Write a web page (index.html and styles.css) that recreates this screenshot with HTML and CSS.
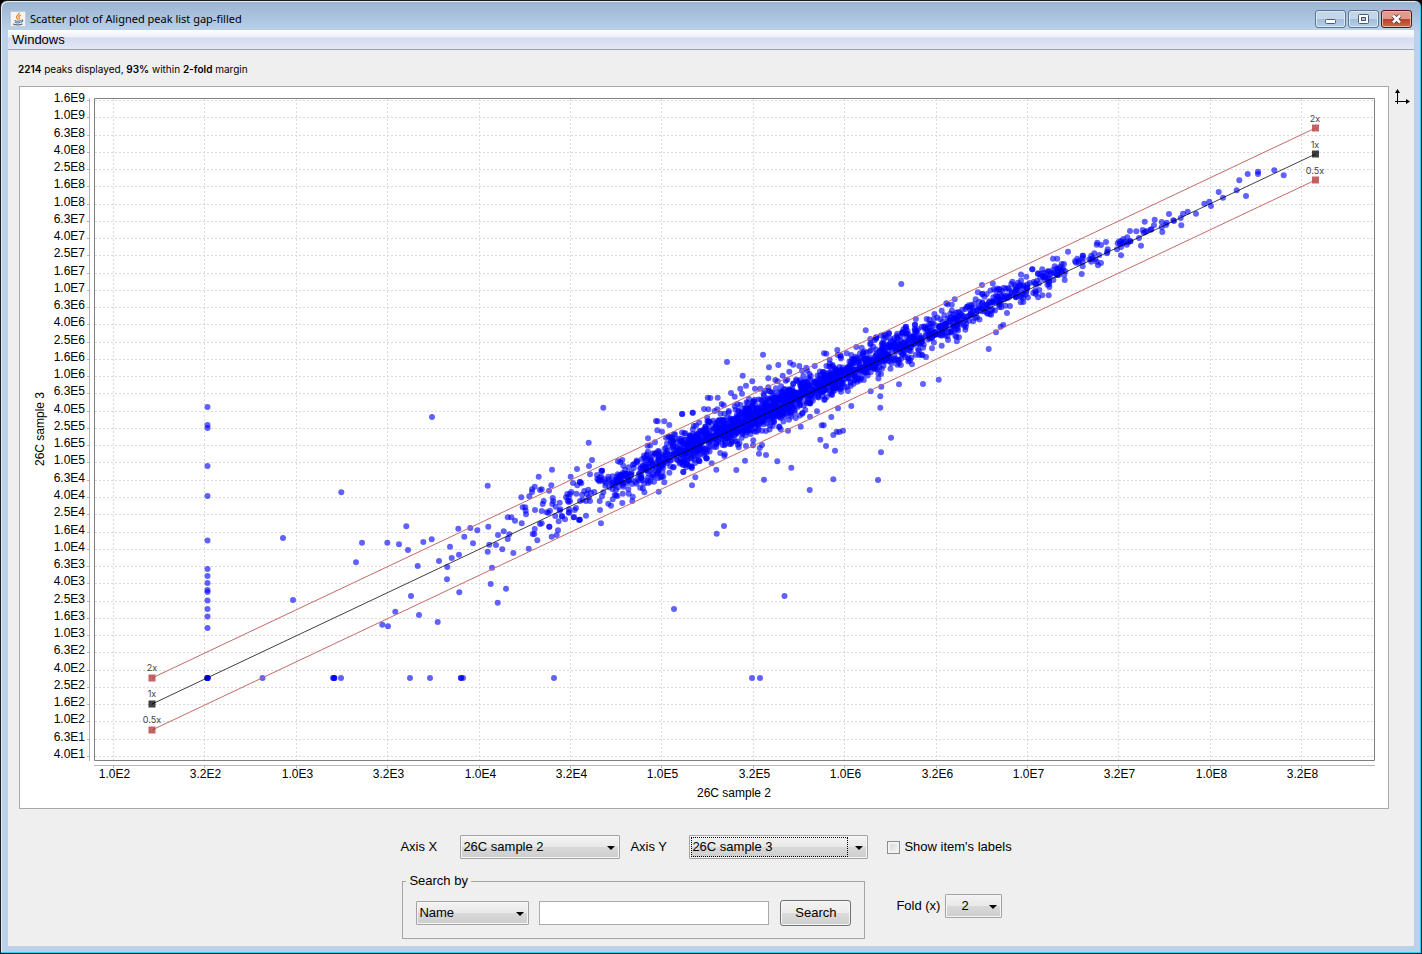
FILE: index.html
```html
<!DOCTYPE html>
<html lang="en">
<head>
<meta charset="utf-8">
<title>Scatter plot of Aligned peak list gap-filled</title>
<link rel="stylesheet" href="styles.css">
</head>
<body>
<div class="window">
  <header class="titlebar">
    <svg class="app-icon" viewBox="0 0 16 16" aria-hidden="true">
      <rect x="0.5" y="0.5" width="15" height="15" rx="1" fill="#f4f4f2" stroke="#c9ccd0"/>
      <path d="M9 1.500c1 2-3 3-2.500 4.800.2.900 1.200 1.300 1 2.400M11 4c-2 .8-2.600 1.600-1.800 2.600.6.8 0 1.400-.6 1.900" fill="none" stroke="#e8852c" stroke-width="1.300"/>
      <path d="M4.500 9.500c1.500.9 5 .9 6.500 0M5 11.300c1.500.8 4 .8 5.500 0M11.300 9c1.800-.4 2.200 1.400-.3 2.300M3 13c2 1.200 7.500 1.200 9.500 0" fill="none" stroke="#51718f" stroke-width="1.100"/>
    </svg>
    <h1 class="title">Scatter plot of Aligned peak list gap-filled</h1>
    <div class="window-buttons">
      <button class="wbtn" type="button" aria-label="Minimize"><svg viewBox="0 0 29 16"><rect x="9.500" y="8.500" width="10" height="4" rx="1" fill="#fff" stroke="#4d5a6b"/></svg></button>
      <button class="wbtn" type="button" aria-label="Maximize"><svg viewBox="0 0 29 16"><rect x="9.500" y="3.500" width="10" height="9" rx="1" fill="#fff" stroke="#4d5a6b"/><rect x="12.500" y="6.500" width="4" height="3" fill="#a9c2df" stroke="#4d5a6b"/></svg></button>
      <button class="wbtn close" type="button" aria-label="Close"><svg viewBox="0 0 29 16"><path d="M11 4.500l7 7M18 4.500l-7 7" stroke="#5b3b3e" stroke-width="4.500"/><path d="M11 4.500l7 7M18 4.500l-7 7" stroke="#fff" stroke-width="2.600"/></svg></button>
    </div>
  </header>
  <div class="client">
    <nav class="menubar"><button class="menu" type="button">Windows</button></nav>
    <p class="summary"><b>2214</b> peaks displayed, <b>93%</b> within <b>2-fold</b> margin</p>
    <main class="workspace">
      <div class="chart">
        <svg id="plot" class="plot" viewBox="20 87 1368 721" role="img" aria-label="Scatter plot of 26C sample 3 against 26C sample 2">
          <g id="grid"></g>
          <path class="frame" d="M94.500 98.500H1374.500V760.500H94.500Z"/>
          <path class="axis" d="M89.500 98V761M94 765.500H1375"/>
          <g id="points"></g>
          <g class="folds">
            <path class="fold" d="M152 678L1315.500 128M152 730L1315.500 180"/>
            <path class="unity" d="M152 704L1315.500 154"/>
            <path class="fold-mark" d="M148.500 674.500h7v7h-7zM148.500 726.500h7v7h-7zM1312 124.500h7v7h-7zM1312 176.500h7v7h-7z"/>
            <path class="unity-mark" d="M148.500 700.500h7v7h-7zM1312 150.500h7v7h-7z"/>
            <g class="fold-label">
              <text x="152" y="671">2x</text><text x="152" y="697">1x</text><text x="152" y="723">0.5x</text>
              <text x="1315" y="122">2x</text><text x="1315" y="148">1x</text><text x="1315" y="174">0.5x</text>
            </g>
          </g>
          <g id="ticks" class="ticks"></g>
          <text class="axis-name" x="734" y="797">26C sample 2</text>
          <text class="axis-name" transform="translate(44 429) rotate(-90)">26C sample 3</text>
        </svg>
      </div>
      <button class="axes-tool" type="button" aria-label="Setup axes">
        <svg viewBox="0 0 16 16"><path d="M3.500 15V2M1 12.500H13" fill="none" stroke="#000"/><path d="M3.500 0L6 4H1zM16 12.500L12 10v5z"/></svg>
      </button>
    </main>
    <form class="controls" onsubmit="return false">
      <div class="row">
        <label class="axis-label" for="ax">Axis X</label>
        <span class="select select-x"><select id="ax"><option>26C sample 2</option></select></span>
        <label class="axis-label second" for="ay">Axis Y</label>
        <span class="select select-y"><select id="ay"><option>26C sample 3</option></select></span>
        <label class="check"><input type="checkbox">Show item's labels</label>
      </div>
      <div class="row lower">
        <fieldset class="search">
          <legend>Search by</legend>
          <span class="select select-name"><select aria-label="Search field"><option>Name</option></select></span>
          <input class="query" type="text" aria-label="Search text">
          <button class="go" type="submit">Search</button>
        </fieldset>
        <label class="fold-text" for="fold">Fold (x)</label>
        <span class="select select-fold"><select id="fold"><option>2</option></select></span>
      </div>
    </form>
  </div>
</div>
<script src="plot.js"></script>
</body>
</html>
```
FILE: styles.css
```css
* { box-sizing: border-box; }
body {
  margin: 0;
  font: 13px/16px "Liberation Sans", Arial, sans-serif;
  color: #000;
  background: #000;
}
button, input, select { font: inherit; color: inherit; }
.window {
  display: flex;
  flex-direction: column;
  min-height: 100vh;
  padding: 0 7px 7px;
  border: 1px solid #1a1a1a;
  border-radius: 7px 7px 0 0;
  background: linear-gradient(#9ab3d0, #b9d1ea 30px, #b9d1ea);
  box-shadow: inset -1px -1px #35d0e6, inset 1px 1px #e4eef8;
}
.titlebar {
  display: flex;
  align-items: center;
  height: 29px;
  padding: 6px 2px 0;
}
.app-icon { width: 16px; height: 16px; margin-right: 4px; }
.title { flex: 1; margin: 0; font: 11px/16px "Noto Sans", "Open Sans", sans-serif; }
.window-buttons { display: flex; gap: 2px; }
.wbtn {
  width: 31px;
  height: 18px;
  padding: 0;
  border: 1px solid #5f7691;
  border-radius: 3px;
  background: linear-gradient(#c3d6ea 50%, #a3bcd8 50%, #b5cfe8);
  box-shadow: inset 0 0 0 1px #dbe7f4;
}
.wbtn svg { display: block; width: 29px; height: 16px; }
.wbtn.close {
  border-color: #55151b;
  background: linear-gradient(#df9b8c 50%, #bb3c26 50%, #cf6a4c);
  box-shadow: inset 0 0 0 1px #e9b6aa;
}
.client { flex: 1; background: #efefef; }
.menubar {
  height: 20px;
  border-bottom: 1px solid #9fa3ae;
  background: linear-gradient(#fff, #eceff8 7px, #d5dcee 8px, #e2e7f6);
}
.menu { height: 19px; padding: 0 4px; border: 0; background: none; }
.summary { margin: 0; padding: 12px 10px 10px; font: 10px/14px Inter, "Liberation Sans", sans-serif; }
.summary b { font-weight: 600; }
.workspace { display: flex; gap: 5px; padding: 0 4px 0 11px; }
.chart { flex: 1; min-width: 0; border: 1px solid #a9a9a9; background: #fff; }
.plot { display: block; width: 100%; height: auto; }
.axes-tool { align-self: flex-start; width: 16px; margin-top: 3px; padding: 0; border: 0; background: none; }
.axes-tool svg { display: block; width: 16px; height: 16px; }

.grid-line { fill: none; stroke: #dadada; stroke-dasharray: 2 2; }
.frame { fill: none; stroke: #808080; }
.axis { fill: none; stroke: #b4b4b4; }
.point { fill: #00f; fill-opacity: 0.62; }
.fold { fill: none; stroke: #c46a6a; }
.unity { fill: none; stroke: #000; stroke-opacity: 0.75; }
.fold-mark { fill: #b84848; fill-opacity: 0.85; }
.unity-mark { fill: #000; fill-opacity: 0.75; }
.fold-label { font: 9px Inter, "Liberation Sans", sans-serif; fill: #444; text-anchor: middle; }
.ticks, .axis-name { font-size: 12px; }
.axis-name { text-anchor: middle; }
.tick-y { text-anchor: end; }
.tick-x { text-anchor: middle; }

.controls { width: max-content; margin: 0 auto; padding: 26px 10px 6px 0; }
.row { display: flex; align-items: center; }
.axis-label { width: 60px; }
.axis-label.second { margin-left: 10px; width: 59px; }
.select { position: relative; display: inline-flex; }
.select::after {
  content: "";
  position: absolute;
  right: 5px;
  top: 11px;
  border: 4px solid transparent;
  border-top-color: #000;
  border-bottom: 0;
  pointer-events: none;
}
select {
  appearance: none;
  width: 100%;
  height: 24px;
  margin: 0;
  padding: 0 18px 0 2px;
  border: 1px solid #a3a3a3;
  border-radius: 1px;
  background: linear-gradient(#f3f3f3, #e8e8e8 50%, #d9d9d9 50%, #cdcdcd);
  box-shadow: inset 0 0 0 1px #f5f5f5;
}
.select-x { width: 160px; }
.select-y { width: 179px; }
.select-y::before {
  content: "";
  position: absolute;
  inset: 2px 20px 2px 2px;
  border: 1px dotted #000;
  pointer-events: none;
}
.select-name { width: 113px; }
.select-fold { width: 57px; }
.select-fold select { padding-left: 15px; }
.check { display: flex; align-items: center; margin-left: 19px; }
.check input {
  appearance: none;
  width: 13px;
  height: 13px;
  margin: 0 4px 0 0;
  border: 1px solid #8a8f94;
  background: linear-gradient(135deg, #cfd4da, #f8f8f8);
  box-shadow: inset 0 0 0 2px #f2f2f2;
}
.lower { margin-top: 14px; padding-left: 2px; }
.search {
  display: flex;
  align-items: center;
  min-width: 0;
  margin: 0;
  padding: 11px 13px 12px;
  border: 1px solid #a5a5a5;
}
.search legend { margin-left: -10px; padding: 0 3px; }
.query { width: 230px; height: 24px; margin: 0 11px 0 10px; padding: 0 3px; border: 1px solid #a9abae; background: #fff; }
.go {
  width: 71px;
  height: 26px;
  padding: 0;
  border: 1px solid #707070;
  border-radius: 3px;
  background: linear-gradient(#f3f3f3, #ebebeb 50%, #dcdcdc 50%, #cfcfcf);
  box-shadow: inset 0 0 0 1px #f8f8f8;
}
.fold-text { margin: 0 5px 0 31px; }
```
FILE: plot.js
```js
const NS = "http://www.w3.org/2000/svg";
function add(parent, name, attrs, text) {
  const el = document.createElementNS(NS, name);
  for (const key in attrs) el.setAttribute(key, attrs[key]);
  if (text) el.textContent = text;
  parent.appendChild(el);
}
const grid = document.getElementById("grid");
const ticks = document.getElementById("ticks");
const points = document.getElementById("points");

// Both axes are logarithmic; values print as mantissa and exponent.
function label(log) {
  const exp = Math.floor(log + 1e-6);
  return Math.pow(10, log - exp).toFixed(1) + "E" + exp;
}
for (let i = 0; i <= 38; i++) {
  const y = Math.round(100 + i * 17.26) + 0.5;
  add(grid, "path", { class: "grid-line", d: `M95 ${y}H1374` });
  add(grid, "path", { class: "axis", d: `M87 ${y}h2` });
  add(ticks, "text", { class: "tick-y", x: 85, y: y + 1.5 }, label(9.2 - i * 0.2));
}
for (let i = 0; i <= 13; i++) {
  const x = Math.round(113 + i * 91.4) + 0.5;
  add(grid, "path", { class: "grid-line", d: `M${x} 99V760` });
  add(grid, "path", { class: "axis", d: `M${x} 766v2` });
  add(ticks, "text", { class: "tick-x", x: x + 1, y: 778 }, label(2 + i * 0.5));
}

function dot(x, y) {
  add(points, "circle", { class: "point", cx: x.toFixed(1), cy: y.toFixed(1), r: 3 });
}
// Peak lists are stored in thirds of a unit relative to their own origin.
function series(x0, y0, list) {
  const n = list.trim().split(/[\s,]+/).map(Number);
  for (let i = 0; i < n.length; i += 2) dot(x0 + n[i] / 3, y0 + n[i + 1] / 3);
}
[407, 425, 428, 466, 496, 540.5, 569, 576, 583, 590, 592, 600.5, 609, 616.5, 628, 678, 678, 678, 678, 678].forEach(y => dot(207.5, y));
[262.5, 333, 334, 334, 334.5, 341, 410, 430, 461, 461, 463, 554, 752, 760].forEach(x => dot(x, 678));
[[283, 538], [293, 600], [432, 417], [674, 609], [784.5, 596], [724, 526]].forEach(p => dot(p[0], p[1]));

series(340, 460, `4,97 443,77 636,29 596,50 692,50 199,199 66,248 142,248 177,253 204,270 48,307 250,246 275,238 330,260
355,206 391,204 412,211 445,200 373,230 399,250 357,284 335,294 297,303 322,321 233,318 321,358 213,408 358,397 166,455
237,465 127,494 144,499 293,486 473,428 452,372 498,386 456,323 443,275 448,254 468,255 487,268 474,225 491,214 508,223
503,237 520,279 566,266 592,241 545,190 525,182 514,172 503,172 544,112 568,109 576,88 584,80 576,96 600,90 605,88
634,76 627,92 548,142 556,142 557,152 558,163 585,150 605,153 611,123 608,132 638,114 640,124 637,132 659,128 647,140
625,158 630,152 620,157 646,168 661,148 659,152 666,169 666,169 675,178 656,184 628,200 628,200 600,192 605,190 584,207
583,222 578,222 654,211 650,225 635,230 682,102 690,102 694,96 709,101 678,112 686,112 683,122 690,123 686,126 699,69
687,148 686,158 704,150 708,144 702,172 717,180 688,157 701,172 711,27 712,76 719,179`);
series(480, 400, `370,23 326,128 336,180 327,198 330,223 300,246 300,246 304,250 306,284 313,273 325,269 320,282 332,278
343,276 326,292 300,303 308,300 318,303 330,303 299,359 318,347 360,330 359,303
363,370 366,289 370,277 385,311 393,317 427,309 457,303 458,290 446,281 445,268 414,184 427,180 430,197 366,212 366,212
364,213 351,225 352,237 358,244 364,230 374,238 378,250 385,230 398,229 398,298 404,285 412,288 376,257 388,262 398,268
408,270 428,281 414,262 504,115 532,91 546,95 528,63 533,64 553,64 568,75 606,42 638,38 558,113 565,110 585,103 613,100
536,275 553,247 522,245 610,216 635,200 355,240 362,241 360,232 371,244 388,244 400,247 410,248
405,240 395,250 416,236 423,246 398,256 405,255 387,238 436,222 441,232 447,241 430,250 440,250 452,225 446,202 466,246`);
series(680, 320, `7,282 38,278 83,233 91,234 113,233 141,126 188,167 249,104 267,142 295,135 217,184 198,197 181,206
153,219 186,221 225,206 241,206 265,202 265,175 286,180 293,184 308,167 328,155 330,128 340,134 358,138 379,143 366,152
317,182 164,230 125,252 72,267 85,268 104,273 112,268 131,256 207,237 255,212 266,213 432,100 439,101 472,90 473,105
481,105 404,138 514,105 557,31 571,57 589,52 627,40 650,48 677,20 705,14 10,456 36,496 46,472 35,440 35,445 95,430
109,449 169,450 195,422 176,382 198,378 219,376 239,384 246,375 237,401 258,405 292,424 334,443 252,479 389,510 460,478
465,392 438,378 421,359 460,345 470,335 478,336 489,332 425,316 431,316 454,291 390,290 474,265 514,258 411,274 362,320
324,332 302,328 376,270 368,278 572,214 604,200 601,229 601,263 633,353 603,397 594,480 657,193 133,408 80,415 110,641`);
series(880, 220, `64,192 199,250 224,238 306,195 307,222 307,222 457,148 457,148 519,116 532,116 564,95 487,226 506,226
554,180 326,387 348,337 362,320 370,315 381,279 176,479 129,492 138,411 96,433 156,385 185,377 237,352
320,222 342,208 394,192 414,188 439,170 12,358 27,340 52,341 78,321 105,314 125,321 140,297 162,297 185,272 430,246
422,247 545,132 541,140 549,146 552,132 547,150 556,154 543,152 553,165 585,124 592,116 597,122
588,128 596,128 609,107`);
series(1080, 110, `8,437 8,445 8,455 8,469 5,492 34,437 33,448 28,448 38,444 43,430 34,455 46,448 50,455 54,466 63,459
58,435 52,398 50,404 63,405 78,396 83,418 82,425 81,430 111,418 123,411 123,436 113,400 118,394 124,394 130,387 120,402
128,400 134,396 142,382 140,404 144,397 151,394 151,394 150,363 169,364 177,384 183,407 188,360 191,368 196,366 194,335
200,363 212,359 214,358 222,346 224,329 245,336 245,352 247,366 260,338 258,345 267,312 280,331 282,333 302,324 304,346
309,311 323,305 348,311 373,281 388,275 393,288 416,246 429,263 470,241 478,211 498,258 503,192 534,185 534,192 583,181
611,196`);

// Main body of the cloud: [from, to, count, mean offset, spread] around the unity line.
let seed = 20117;
function rnd() {
  seed = (seed * 1664525 + 1013904223) % 4294967296;
  return seed / 4294967296;
}
function gauss() {
  return Math.sqrt(-2 * Math.log(rnd() + 1e-9)) * Math.cos(2 * Math.PI * rnd());
}
[
  [616, 640, 45, -4, 7], [640, 680, 150, -4, 9], [680, 720, 240, -4, 9], [720, 760, 280, -3, 9],
  [760, 800, 280, -3, 9], [800, 840, 240, -3, 8], [840, 880, 190, -3, 8], [880, 920, 170, -3, 8],
  [920, 960, 120, -3, 7], [960, 1000, 85, -4, 7], [1000, 1030, 54, -3, 6], [1030, 1064, 46, -4, 6]
].forEach(([from, to, count, mean, spread]) => {
  for (let i = 0; i < count; i++) {
    const x = from + rnd() * (to - from);
    const off = Math.max(-24, Math.min(21, mean + gauss() * spread));
    dot(x, 704 - (x - 152) * 0.4727 + off);
  }
});
```
